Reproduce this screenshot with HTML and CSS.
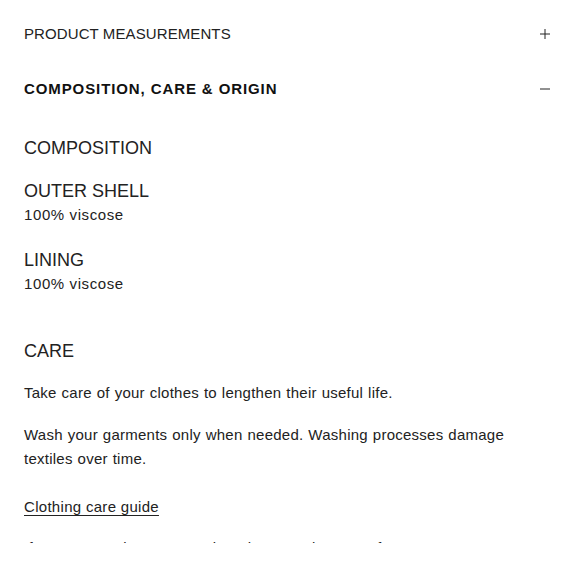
FILE: index.html
```html
<!DOCTYPE html>
<html>
<head>
  <title>Composition, care & origin</title>
  <meta charset="utf-8">
  <link rel="stylesheet" href="styles.css">
</head>
<body>
<div class="sheet">
  <div class="acc-item">
    <div class="acc-head">
      <span class="acc-title">PRODUCT MEASUREMENTS</span>
      <svg class="acc-icon" width="10" height="10" viewBox="0 0 10 10"><path d="M0 5H10M5 0V10" stroke="#222" stroke-width="1"/></svg>
    </div>
  </div>
  <div class="acc-item open">
    <div class="acc-head">
      <span class="acc-title">COMPOSITION, CARE &amp; ORIGIN</span>
      <svg class="acc-icon" width="10" height="10" viewBox="0 0 10 10"><path d="M0 5H10" stroke="#222" stroke-width="1"/></svg>
    </div>
    <div class="acc-body">
      <h3 class="sec-title">COMPOSITION</h3>
      <div class="part">
        <h4 class="part-title">OUTER SHELL</h4>
        <p class="part-value">100% viscose</p>
      </div>
      <div class="part">
        <h4 class="part-title">LINING</h4>
        <p class="part-value">100% viscose</p>
      </div>

      <h3 class="sec-title care">CARE</h3>
      <p class="txt">Take care of your clothes to lengthen their useful life.</p>
      <p class="txt">Wash your garments only when needed. Washing processes damage textiles over time.</p>
      <a class="guide" href="#">Clothing care guide</a>
      <p class="txt cut">If you want to know more about how to take care of your garments</p>
    </div>
  </div>
</div>
</body>
</html>
```

FILE: styles.css
```css
body {
  margin: 0;
  background: #fff;
  color: #222;
  font-family: 'Liberation Sans', Arial, sans-serif;
}
.sheet {
  height: 543px; /* la vista corta el contenido aquí */
  overflow: hidden;
  padding-top: 6px;
  box-sizing: border-box;
}
.acc-head {
  height: 55px;
  display: flex;
  align-items: center;
  justify-content: space-between;
  padding: 0 30px 0 24px;
}
.acc-title {
  font-size: 15px;
  letter-spacing: 0.1px;
}
.open .acc-title {
  font-weight: bold;
  letter-spacing: 0.9px;
  color: #111;
}
.acc-body {
  padding: 20px 24px 0 24px;
}
.sec-title {
  margin: 0;
  font-size: 18px;
  font-weight: normal;
  line-height: 24px;
}
.sec-title.care {
  margin-top: 43px;
}
.part {
  margin-top: 19px;
}
.part + .part {
  margin-top: 21px;
}
.part-title {
  margin: 0;
  font-size: 18px;
  font-weight: normal;
  line-height: 24px;
}
.part-value {
  margin: 0;
  font-size: 15px;
  line-height: 24px;
  letter-spacing: 0.6px;
}
.txt {
  margin: 18px 0 0 0;
  font-size: 15px;
  line-height: 24px;
  letter-spacing: 0.25px;
  word-spacing: 0.5px;
}
.guide {
  display: block;
  margin-top: 24px;
  font-size: 15px;
  line-height: 24px;
  letter-spacing: 0.3px;
  color: #222;
  text-decoration: underline;
  text-underline-offset: 3px;
}
.txt.cut {
  margin-top: 17px;
}
```
